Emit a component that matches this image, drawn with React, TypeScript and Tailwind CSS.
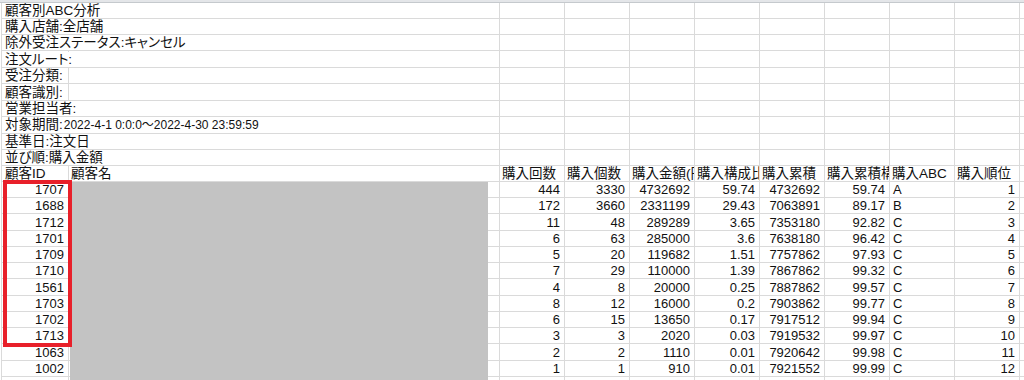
const infoLines: [string, string][] = [
  ['顧客別ABC分析', ''],
  ['購入店舗:全店舗', ''],
  ['除外受注ステータス:キャンセル', ''],
  ['注文ルート:', ''],
  ['受注分類:', ''],
  ['顧客識別:', ''],
  ['営業担当者:', ''],
  ['対象期間:', '2022-4-1 0:0:0～2022-4-30 23:59:59'],
  ['基準日:注文日', ''],
  ['並び順:購入金額', ''],
];

const headers = ['購入回数', '購入個数', '購入金額(円)', '購入構成比', '購入累積', '購入累積構成比', '購入ABC', '購入順位'];

// id, 回数, 個数, 金額, 構成比, 累積, 累積構成比, ABC, 順位
const rows: (string | number)[][] = [
  [1707, 444, 3330, 4732692, '59.74', 4732692, '59.74', 'A', 1],
  [1688, 172, 3660, 2331199, '29.43', 7063891, '89.17', 'B', 2],
  [1712, 11, 48, 289289, '3.65', 7353180, '92.82', 'C', 3],
  [1701, 6, 63, 285000, '3.6', 7638180, '96.42', 'C', 4],
  [1709, 5, 20, 119682, '1.51', 7757862, '97.93', 'C', 5],
  [1710, 7, 29, 110000, '1.39', 7867862, '99.32', 'C', 6],
  [1561, 4, 8, 20000, '0.25', 7887862, '99.57', 'C', 7],
  [1703, 8, 12, 16000, '0.2', 7903862, '99.77', 'C', 8],
  [1702, 6, 15, 13650, '0.17', 7917512, '99.94', 'C', 9],
  [1713, 3, 3, 2020, '0.03', 7919532, '99.97', 'C', 10],
  [1063, 2, 2, 1110, '0.01', 7920642, '99.98', 'C', 11],
  [1002, 1, 1, 910, '0.01', 7921552, '99.99', 'C', 12],
];

// row pitch in the screenshot isn't a clean 16px, some rows are 17
const tall = [3, 5, 7, 13, 17, 21];

const rowCls = (i: number) =>
  'grid grid-cols-[67px_431px_65px_65px_65px_65px_65px_65px_65px_65px_1fr] border-b border-[#dadada] ' +
  (tall.includes(i) ? 'h-[17px]' : 'h-[16px]');

const cell = 'border-r border-[#dadada] flex items-end whitespace-nowrap overflow-hidden leading-[15px]';
const num = cell + ' justify-end pr-[4px] text-[13px]';

export default function App() {
  return (
    <div
      className="relative w-[1024px] h-[380px] overflow-hidden bg-white text-[13.5px] text-[#111] [font-feature-settings:'palt']"
      style={{ fontFamily: '"Liberation Sans", "Noto Sans CJK JP", sans-serif' }}
    >
      <div className="h-[3px] bg-[#e4e6e9] border-b border-[#c5c9cd]" />
      <div className="ml-px border-l border-[#dadada]">
        {infoLines.map(([label, rest], i) => (
          <div key={i} className={rowCls(i)}>
            <div className="border-r border-[#dadada] flex items-end whitespace-nowrap leading-[15px] overflow-visible">
              <span className="bg-white pl-[3px] pr-px">
                {label}
                {rest && <span className="text-[12px] pl-px">{rest}</span>}
              </span>
            </div>
            {Array.from({ length: 10 }).map((_, j) => (
              <div key={j} className={j === 9 ? '' : cell} />
            ))}
          </div>
        ))}

        {/* column headers */}
        <div className={rowCls(10)}>
          <div className={cell + ' pl-[3px]'}>顧客ID</div>
          <div className={cell + ' pl-[2px]'}>顧客名</div>
          {headers.map((h) => (
            <div key={h} className={cell + ' pl-[2px]'}>{h}</div>
          ))}
          <div />
        </div>

        {rows.map((r, i) => (
          <div key={r[0]} className={rowCls(11 + i)}>
            <div className={num}>{r[0]}</div>
            <div className={cell} />
            {r.slice(1).map((v, j) => (
              <div key={j} className={j === 6 ? cell + ' pl-[3px] text-[13px]' : num}>
                {v}
              </div>
            ))}
            <div />
          </div>
        ))}

        <div className={rowCls(23)}>
          {Array.from({ length: 10 }).map((_, j) => (
            <div key={j} className={cell} />
          ))}
          <div />
        </div>
      </div>

      {/* masked customer names */}
      <div className="absolute left-[70px] top-[182px] w-[418px] h-[210px] bg-[#c3c3c3]" />
      {/* highlight box */}
      <div className="absolute left-[3px] top-[180px] w-[69px] h-[167px] border-4 border-[#e8202a]" />
    </div>
  );
}
